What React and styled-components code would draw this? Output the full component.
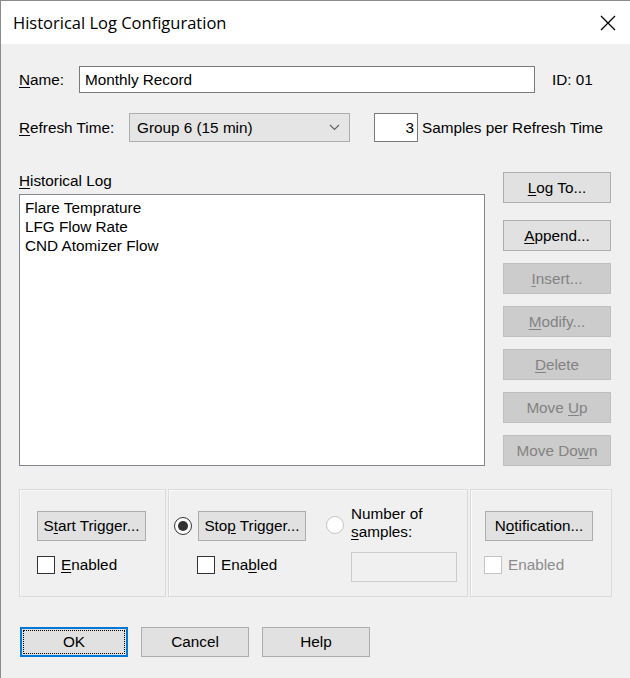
import React from 'react'
import styled, { createGlobalStyle } from 'styled-components'

const Global = createGlobalStyle`
  html, body { margin: 0; padding: 0; background: #f0f0f0; }
  body {
    font-family: "Liberation Sans", Arial, sans-serif;
    font-size: 15.3px;
    color: #000;
  }
  u { text-decoration: underline; text-underline-offset: 2px; text-decoration-thickness: 1px; }
`

const Window = styled.div`
  width: 630px; height: 678px; box-sizing: border-box;
  border-top: 1px solid #8c8c8c; border-left: 1px solid #8c8c8c;
  background: #f0f0f0;
  display: flex; flex-direction: column;
  overflow: hidden;
`

const TitleBar = styled.div`
  height: 43px; flex-shrink: 0;
  background: #fff;
  display: flex; align-items: center; justify-content: space-between;
  padding: 0 14px 0 12px;
  font-family: "Open Sans", "Liberation Sans", sans-serif;
  font-size: 16.5px;
  color: #000;
`

const Body = styled.div`
  padding: 22px 18px 0 18px;
  display: flex; flex-direction: column;
`

const Row = styled.div`
  display: flex; align-items: center;
  height: ${p => p.h || 27}px;
  margin-top: ${p => p.mt || 0}px;
`

const Label = styled.span`
  width: ${p => (p.w ? `${p.w}px` : 'auto')}; flex-shrink: 0;
  margin-left: ${p => p.ml || 0}px;
  white-space: nowrap;
`

const TextInput = styled.div`
  box-sizing: border-box;
  width: ${p => p.w}px; height: ${p => p.h || 27}px;
  background: #fff; border: 1px solid #7a7a7a;
  display: flex; align-items: center;
  justify-content: ${p => (p.right ? 'flex-end' : 'flex-start')};
  padding: 0 ${p => (p.right ? 3 : 5)}px;
  margin-left: ${p => p.ml || 0}px;
`

const Select = styled.div`
  box-sizing: border-box;
  width: 221px; height: 29px;
  background: #e5e5e5; border: 1px solid #adadad;
  display: flex; align-items: center; justify-content: space-between;
  padding: 0 9px 0 7px;
`

const Main = styled.div`
  display: flex; margin-top: 30px;
`

const LeftCol = styled.div`
  width: 466px; display: flex; flex-direction: column;
`

const ListLabel = styled.div`
  height: 22px; line-height: 17px;
`

const ListBox = styled.div`
  box-sizing: border-box;
  height: 272px;
  background: #fff; border: 1px solid #828790;
  padding: 3px 5px;
  line-height: 19px;
`

const ButtonCol = styled.div`
  margin-left: 18px;
  display: flex; flex-direction: column;
`

const Button = styled.div`
  position: relative;
  box-sizing: border-box;
  flex-shrink: 0;
  width: ${p => p.w || 108}px; height: ${p => p.h || 30}px;
  margin-bottom: ${p => p.mb || 0}px;
  background: ${p => (p.disabled ? '#cccccc' : '#e1e1e1')};
  border: ${p => (p.focused ? '2px solid #0078d7' : `1px solid ${p.disabled ? '#bfbfbf' : '#adadad'}`)};
  color: ${p => (p.disabled ? '#838383' : '#000')};
  text-align: center;
  line-height: ${p => (p.h || 30) - (p.focused ? 4 : 2)}px;
  white-space: nowrap;
  ${p => p.focused && `
    &::after {
      content: '';
      position: absolute; inset: 1px;
      border: 1px dotted #000;
    }
  `}
`

const Groups = styled.div`
  display: flex; gap: 2px; margin-top: 23px;
`

const GroupBox = styled.div`
  box-sizing: border-box;
  width: ${p => p.w}px; height: 108px;
  border: 1px solid #dadada;
  box-shadow: inset 1px 1px 0 #fafafa;
  padding: ${p => p.pad};
  display: flex;
`

const Stack = styled.div`
  display: flex; flex-direction: column;
  margin-top: ${p => p.mt || 0}px;
  margin-left: ${p => p.ml || 0}px;
`

const CheckRow = styled.div`
  display: flex; align-items: center;
  margin-top: 15px;
  margin-left: ${p => p.ml || 0}px;
  color: ${p => (p.disabled ? '#8c8c8c' : '#000')};
`

const CheckBox = styled.span`
  box-sizing: border-box;
  width: 18px; height: 18px;
  background: #fff;
  border: 1px solid ${p => (p.disabled ? '#c4c4c4' : '#333')};
  margin-right: 6px;
`

const Radio = styled.span`
  box-sizing: border-box;
  width: 18px; height: 18px; border-radius: 50%;
  background: #fff;
  border: 1px solid ${p => (p.disabled ? '#c4c4c4' : '#333')};
  display: flex; align-items: center; justify-content: center;
  flex-shrink: 0;
  margin-top: ${p => p.mt || 0}px;
  &::after {
    content: '';
    width: 10px; height: 10px; border-radius: 50%;
    background: ${p => (p.checked ? '#333' : 'transparent')};
  }
`

const InlineRow = styled.div`
  display: flex; align-items: ${p => p.align || 'center'};
  gap: ${p => p.gap || 0}px;
`

const SampleText = styled.div`
  line-height: 18px;
`

const DisabledInput = styled.div`
  box-sizing: border-box;
  width: 106px; height: 30px;
  margin-top: 11px;
  background: #f0f0f0; border: 1px solid #cccccc;
`

const Footer = styled.div`
  display: flex; gap: 13px;
  margin-top: 30px; margin-left: 1px;
`

function CloseIcon() {
  return (
    <svg width="16" height="16" viewBox="0 0 16 16">
      <path d="M1 1 L15 15 M15 1 L1 15" stroke="#000" strokeWidth="1.3" fill="none" />
    </svg>
  )
}

function Chevron() {
  return (
    <svg width="11" height="7" viewBox="0 0 11 7">
      <path d="M1 1 L5.5 5.5 L10 1" stroke="#606060" strokeWidth="1.1" fill="none" />
    </svg>
  )
}

export default function App() {
  return (
    <>
      <Global />
      <Window>
        <TitleBar>
          <span>Historical Log Configuration</span>
          <CloseIcon />
        </TitleBar>
        <Body>
          <Row>
            <Label w={60}><u>N</u>ame:</Label>
            <TextInput w={456}>Monthly Record</TextInput>
            <Label ml={17}>ID: 01</Label>
          </Row>
          <Row h={29} mt={20}>
            <Label w={110}><u>R</u>efresh Time:</Label>
            <Select>
              <span>Group 6 (15 min)</span>
              <Chevron />
            </Select>
            <TextInput w={44} h={29} ml={24} right>3</TextInput>
            <Label ml={4}>Samples per Refresh Time</Label>
          </Row>
          <Main>
            <LeftCol>
              <ListLabel><u>H</u>istorical Log</ListLabel>
              <ListBox>
                <div>Flare Temprature</div>
                <div>LFG Flow Rate</div>
                <div>CND Atomizer Flow</div>
              </ListBox>
            </LeftCol>
            <ButtonCol>
              <Button h={31} mb={17}><u>L</u>og To...</Button>
              <Button h={31} mb={12}><u>A</u>ppend...</Button>
              <Button h={31} mb={12} disabled><u>I</u>nsert...</Button>
              <Button h={31} mb={12} disabled><u>M</u>odify...</Button>
              <Button h={31} mb={12} disabled><u>D</u>elete</Button>
              <Button h={31} mb={12} disabled>Move <u>U</u>p</Button>
              <Button h={31} disabled>Move Do<u>w</u>n</Button>
            </ButtonCol>
          </Main>
          <Groups>
            <GroupBox w={147} pad="21px 0 0 17px">
              <Stack>
                <Button w={109}>S<u>t</u>art Trigger...</Button>
                <CheckRow>
                  <CheckBox />
                  <span><u>E</u>nabled</span>
                </CheckRow>
              </Stack>
            </GroupBox>
            <GroupBox w={300} pad="15px 0 0 5px">
              <Stack mt={6}>
                <InlineRow gap={6}>
                  <Radio checked />
                  <Button w={108}>Sto<u>p</u> Trigger...</Button>
                </InlineRow>
                <CheckRow ml={23}>
                  <CheckBox />
                  <span>Ena<u>b</u>led</span>
                </CheckRow>
              </Stack>
              <Stack ml={20}>
                <InlineRow align="flex-start" gap={7}>
                  <Radio disabled mt={11} />
                  <Stack>
                    <SampleText>Number of<br /><u>s</u>amples:</SampleText>
                    <DisabledInput />
                  </Stack>
                </InlineRow>
              </Stack>
            </GroupBox>
            <GroupBox w={142} pad="21px 0 0 14px">
              <Stack>
                <Button w={108}>N<u>o</u>tification...</Button>
                <CheckRow ml={-1} disabled>
                  <CheckBox disabled />
                  <span>Enabled</span>
                </CheckRow>
              </Stack>
            </GroupBox>
          </Groups>
          <Footer>
            <Button w={108} focused>OK</Button>
            <Button w={108}>Cancel</Button>
            <Button w={108}>Help</Button>
          </Footer>
        </Body>
      </Window>
    </>
  )
}
